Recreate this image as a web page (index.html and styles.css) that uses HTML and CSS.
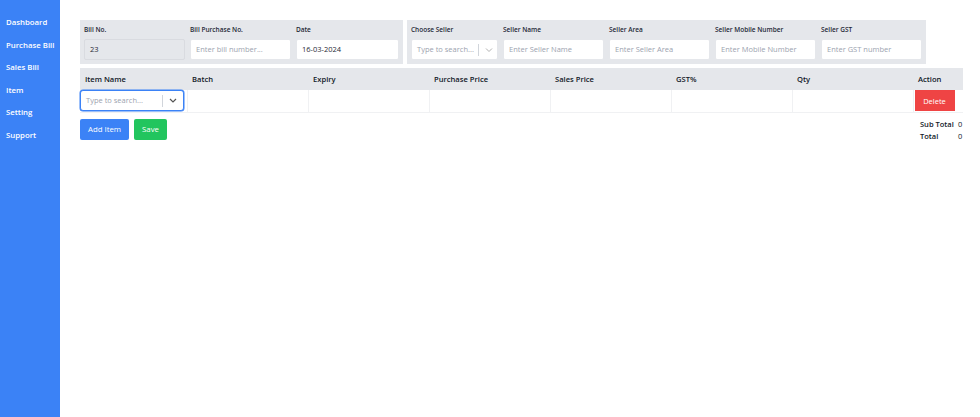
FILE: index.html
```html
<!DOCTYPE html>
<html lang="en">
<head>
    <meta charset="UTF-8">
    <title>Purchase Bill</title>
    <link rel="stylesheet" href="styles.css">
</head>
<body>
<div class="sidebar">
    <a class="nav_item">Dashboard</a>
    <a class="nav_item">Purchase Bill</a>
    <a class="nav_item">Sales Bill</a>
    <a class="nav_item">Item</a>
    <a class="nav_item">Setting</a>
    <a class="nav_item">Support</a>
</div>
<div class="main">
    <div class="top_row">
        <div class="panel">
            <div class="field">
                <label>Bill No.</label>
                <div class="input disabled">23</div>
            </div>
            <div class="field">
                <label>Bill Purchase No.</label>
                <div class="input placeholder">Enter bill number...</div>
            </div>
            <div class="field wide">
                <label>Date</label>
                <div class="input">16-03-2024</div>
            </div>
        </div>
        <div class="panel">
            <div class="field narrow">
                <label>Choose Seller</label>
                <div class="input select">
                    <span class="placeholder">Type to search...</span>
                    <span class="sep"></span>
                    <svg class="chev light" width="8" height="6" viewBox="0 0 8 6"><path d="M1 1.5 L4 4.5 L7 1.5" fill="none" stroke="#b0b0b0" stroke-width="1"/></svg>
                </div>
            </div>
            <div class="field">
                <label>Seller Name</label>
                <div class="input placeholder">Enter Seller Name</div>
            </div>
            <div class="field">
                <label>Seller Area</label>
                <div class="input placeholder">Enter Seller Area</div>
            </div>
            <div class="field">
                <label>Seller Mobile Number</label>
                <div class="input placeholder">Enter Mobile Number</div>
            </div>
            <div class="field">
                <label>Seller GST</label>
                <div class="input placeholder">Enter GST number</div>
            </div>
        </div>
    </div>

    <table class="items">
        <thead>
        <tr>
            <th class="c_item">Item Name</th>
            <th class="c_std">Batch</th>
            <th class="c_std">Expiry</th>
            <th class="c_std">Purchase Price</th>
            <th class="c_std">Sales Price</th>
            <th class="c_std">GST%</th>
            <th class="c_std">Qty</th>
            <th class="c_action">Action</th>
        </tr>
        </thead>
        <tbody>
        <tr>
            <td class="item_cell">
                <div class="input select focus">
                    <span class="placeholder">Type to search...</span>
                    <span class="sep"></span>
                    <svg class="chev" width="8" height="5" viewBox="0 0 8 5"><path d="M1 1 L4 4 L7 1" fill="none" stroke="#555" stroke-width="1.2"/></svg>
                </div>
            </td>
            <td></td>
            <td></td>
            <td></td>
            <td></td>
            <td></td>
            <td></td>
            <td class="action_cell"><button class="btn red">Delete</button></td>
        </tr>
        </tbody>
    </table>

    <div class="bottom_row">
        <div class="buttons">
            <button class="btn blue">Add Item</button>
            <button class="btn green">Save</button>
        </div>
        <div class="totals">
            <div class="total_line"><span class="t_label">Sub Total</span><span>0</span></div>
            <div class="total_line"><span class="t_label">Total</span><span>0</span></div>
        </div>
    </div>
</div>
</body>
</html>
```

FILE: styles.css
```css
* {
    box-sizing: border-box;
}

html, body {
    margin: 0;
    padding: 0;
    height: 100%;
    overflow: hidden;
}

body {
    display: flex;
    font-family: "Open Sans", "Noto Sans", sans-serif;
    color: #111827;
    background-color: #ffffff;
}

.sidebar {
    width: 60px;
    min-height: 417px;
    background-color: #3b82f6;
    padding-top: 16px;
    flex-shrink: 0;
}

.nav_item {
    display: block;
    color: #ffffff;
    font-size: 7.8px;
    font-weight: 600;
    height: 22.6px;
    line-height: 13px;
    padding-left: 6px;
    white-space: nowrap;
}

.main {
    padding: 20px 0 0 20px;
    width: 920px;
    flex-shrink: 0;
}

.top_row {
    display: flex;
    gap: 4px;
}

.panel {
    display: flex;
    gap: 5px;
    background-color: #e5e7eb;
    padding: 4px;
    height: 44px;
}

.field {
    display: flex;
    flex-direction: column;
    width: 101px;
}

.field.wide {
    width: 103px;
}

.field.narrow {
    width: 87px;
}

.field label {
    font-size: 6.5px;
    font-weight: 600;
    color: #1f2937;
    height: 15px;
    line-height: 12px;
}

.input {
    height: 21px;
    background-color: #ffffff;
    border: 1px solid #e5e7eb;
    border-radius: 2px;
    font-size: 7.5px;
    line-height: 19px;
    padding-left: 5px;
    color: #1f2937;
    white-space: nowrap;
    overflow: hidden;
}

.input.disabled {
    background-color: #e5e7eb;
    border-color: #d9dbe0;
}

.placeholder {
    color: #9ca3af;
}

.select {
    display: flex;
    align-items: center;
    padding-right: 4px;
}

.select .placeholder {
    flex: 1;
}

.sep {
    width: 1px;
    height: 12px;
    background-color: #d1d5db;
    margin: 0 6px 0 2px;
}

.items {
    border-collapse: collapse;
    margin-top: 4px;
    width: 883px;
    table-layout: fixed;
}

.items th {
    background-color: #e5e7eb;
    font-size: 7.6px;
    font-weight: 600;
    text-align: left;
    height: 22px;
    padding: 0 5px;
    color: #111827;
    white-space: nowrap;
}

.c_item { width: 107px; }
.c_std { width: 121px; }
.c_action { width: 50px; }

.items td {
    height: 22px;
    padding: 0;
    border-right: 1px solid #f0f1f3;
    border-bottom: 1px solid #f0f1f3;
}

.items td.action_cell {
    border-right: none;
    padding-left: 1px;
}

.item_cell {
    padding: 0 2px 0 1px;
}

.input.focus {
    border: 1px solid #3b82f6;
    border-radius: 3px;
    height: 21px;
    width: 104px;
    box-shadow: 0 0 0 0.5px #3b82f6;
    padding-right: 6px;
}

.bottom_row {
    display: flex;
    justify-content: space-between;
    width: 883px;
    margin-top: 6px;
}

.buttons {
    display: flex;
    gap: 5px;
}

.btn {
    border: none;
    color: #ffffff;
    font-family: "Open Sans", "Noto Sans", sans-serif;
    font-size: 7.8px;
    height: 21px;
    border-radius: 2px;
    padding: 0;
    cursor: pointer;
}

.btn.blue {
    background-color: #3b82f6;
    width: 49px;
}

.btn.green {
    background-color: #22c55e;
    width: 33px;
}

.btn.red {
    background-color: #ef4444;
    width: 40px;
    border-radius: 0;
    display: block;
    font-size: 7.5px;
}

.totals {
    width: 43px;
    font-size: 7.5px;
    font-weight: 600;
}

.total_line {
    display: flex;
    height: 12px;
    line-height: 10px;
    white-space: nowrap;
}

.total_line .t_label {
    width: 38px;
}

.total_line span:last-child {
    font-weight: 400;
}
```
